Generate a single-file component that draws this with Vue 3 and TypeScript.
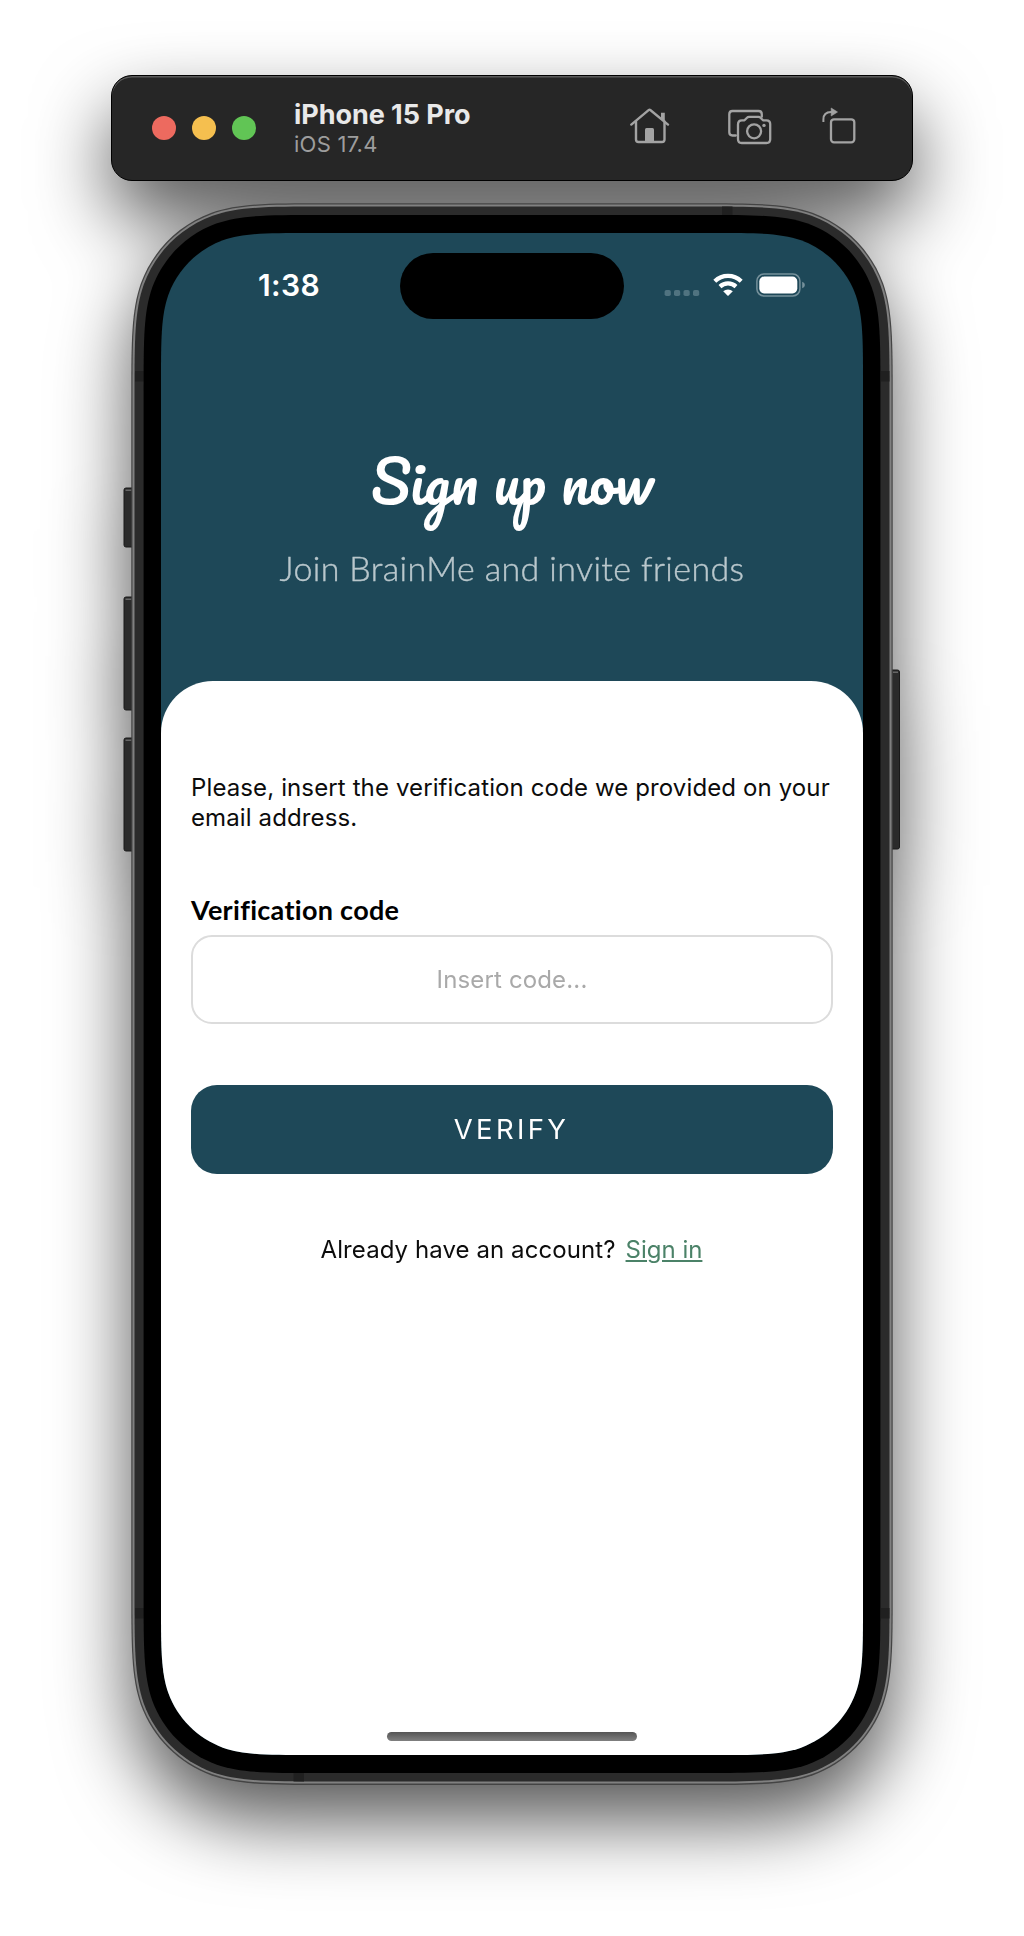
<script setup lang="ts">
import { ref } from 'vue'

const code = ref('')

// Rounded rectangle with continuous (squircle-like) corners.
function squircle(x: number, y: number, w: number, h: number, r: number): string {
  const a = 1.52866 * r
  const b = 1.08849 * r
  const c = 0.845 * r
  const d = 0.63149 * r
  const e = 0.07491 * r
  const f = 0.37282 * r
  const g = 0.16906 * r
  const R = x + w
  const B = y + h
  return [
    `M${x + a} ${y}L${R - a} ${y}`,
    `C${R - b} ${y} ${R - c} ${y} ${R - d} ${y + e}`,
    `C${R - f} ${y + g} ${R - g} ${y + f} ${R - e} ${y + d}`,
    `C${R} ${y + c} ${R} ${y + b} ${R} ${y + a}`,
    `L${R} ${B - a}`,
    `C${R} ${B - b} ${R} ${B - c} ${R - e} ${B - d}`,
    `C${R - g} ${B - f} ${R - f} ${B - g} ${R - d} ${B - e}`,
    `C${R - c} ${B} ${R - b} ${B} ${R - a} ${B}`,
    `L${x + a} ${B}`,
    `C${x + b} ${B} ${x + c} ${B} ${x + d} ${B - e}`,
    `C${x + f} ${B - g} ${x + g} ${B - f} ${x + e} ${B - d}`,
    `C${x} ${B - c} ${x} ${B - b} ${x} ${B - a}`,
    `L${x} ${y + a}`,
    `C${x} ${y + b} ${x} ${y + c} ${x + e} ${y + d}`,
    `C${x + g} ${y + f} ${x + f} ${y + g} ${x + d} ${y + e}`,
    `C${x + c} ${y} ${x + b} ${y} ${x + a} ${y}Z`,
  ].join('')
}

const edge = squircle(-0.7, 0.3, 761.4, 1581.7, 127)
const rim = squircle(0.5, 1.5, 759, 1579, 126)
const body = squircle(2.5, 3.5, 755, 1575, 123.6)
const bezel = squircle(11.6, 12, 736.8, 1558, 115)
const screenClip = `path("${squircle(0, 0, 702, 1522, 98)}")`
</script>

<template>
  <main class="desktop">
    <div class="simulator">
      <header class="toolbar">
        <div class="lights">
          <span class="light close"></span>
          <span class="light minimise"></span>
          <span class="light zoom"></span>
        </div>
        <div class="device">
          <strong>iPhone 15 Pro</strong>
          <span>iOS 17.4</span>
        </div>
        <nav class="actions">
          <svg width="40" height="38" viewBox="0 0 40 38" fill="none" stroke="#a3a3a3" stroke-width="2.4" stroke-linecap="round" stroke-linejoin="round">
            <path d="M1.3 17.6 18.6 3.2a1.6 1.6 0 0 1 2 0L38 17.6" />
            <path d="M6 14.5V32.500q0 2.500 2.500 2.500H32q2.500 0 2.500-2.500V14.500" />
            <path d="M31 5.800h3.800v9L31 11.500z" fill="#a3a3a3" stroke="none" />
            <path d="M15 35V22.500q0-1.500 1.500-1.500h6q1.500 0 1.500 1.500V35z" fill="#a3a3a3" stroke="none" />
          </svg>
          <svg width="44" height="38" viewBox="0 0 44 38" fill="none" stroke="#a3a3a3" stroke-width="2.3" stroke-linecap="round" stroke-linejoin="round">
            <path d="M7.800 28.500H4.500Q1.300 28.500 1.300 25.300V7.200Q1.300 4 4.500 4H30.500Q33.800 4 33.800 7.200V9.800" />
            <path d="M10 17.500Q10 13.300 14 13.300H16.500L19 10.700Q19.800 9.900 21 9.900H30.500Q31.700 9.900 32.500 10.700L35 13.300H38.500Q42.200 13.300 42.200 17V32.300Q42.200 36 38.500 36H13.700Q10 36 10 32.300Z" />
            <circle cx="26.100" cy="24.300" r="7" />
            <circle cx="36" cy="18.400" r="1.700" fill="#a3a3a3" stroke="none" />
          </svg>
          <svg width="34" height="38" viewBox="0 0 34 38" fill="none" stroke="#a3a3a3" stroke-width="2.3">
            <rect x="9" y="12.300" width="23.300" height="23" rx="3" />
            <path d="M1.400 15V12.500Q1.400 5 9 5H10" stroke-width="2" />
            <path d="M9.200 1 15.500 5 9.200 9z" fill="#a3a3a3" stroke-width=".6" stroke-linejoin="round" />
          </svg>
        </nav>
      </header>

      <section class="phone">
        <svg class="chassis" width="777" height="1582" viewBox="-8 0 777 1582">
          <g fill="#2b2b2b" stroke="#1a1a1a" stroke-width="1">
            <rect x="-8" y="285" width="12" height="59" rx="2" />
            <rect x="-8" y="394" width="12" height="113" rx="2" />
            <rect x="-8" y="535" width="12" height="113" rx="2" />
            <rect x="756" y="467" width="11.500" height="179" rx="2" />
          </g>
          <g fill="#666">
            <rect x="-6.500" y="286.500" width="6" height="1.500" />
            <rect x="-6.500" y="395.500" width="6" height="1.500" />
            <rect x="-6.500" y="536.500" width="6" height="1.500" />
            <rect x="761" y="468.500" width="5" height="1.500" />
          </g>
          <path :d="edge" fill="#444" />
          <path :d="rim" fill="#808080" />
          <path :d="body" fill="#2b2b2b" />
          <g fill="#202020">
            <rect x="3" y="168" width="9" height="10.500" />
            <rect x="749" y="168" width="8.500" height="10.500" />
            <rect x="3" y="1405" width="9" height="10.500" />
            <rect x="749" y="1405" width="8.500" height="10.500" />
            <rect x="590" y="3.500" width="10.500" height="9" />
            <rect x="161.500" y="1570" width="10.500" height="8.500" />
          </g>
          <path :d="bezel" fill="#000" />
        </svg>

        <div class="screen" :style="{ clipPath: screenClip }">
          <div class="status">
            <time>1:38</time>
            <div class="island"></div>
            <div class="indicators">
              <svg width="36" height="24" viewBox="0 0 36 24" fill="#507380">
                <rect x=".6" y="17" width="6.200" height="6" rx="1.800" />
                <rect x="10" y="17" width="6.200" height="6" rx="1.800" />
                <rect x="19.500" y="17" width="6.200" height="6" rx="1.800" />
                <rect x="29" y="17" width="6.200" height="6" rx="1.800" />
              </svg>
              <svg width="30" height="24" viewBox="0 0 30 24" fill="none" stroke="#fff" stroke-width="4.200">
                <path d="M1.800 8.300A19 19 0 0 1 28.200 8.300" />
                <path d="M7 13.600A11.700 11.700 0 0 1 23 13.600" />
                <path d="M10.200 18.300A7 7 0 0 1 19.800 18.300L15.600 22.500Q15 23.100 14.400 22.500Z" fill="#fff" stroke="none" />
              </svg>
              <svg width="50" height="24" viewBox="0 0 50 24">
                <rect x=".9" y="1.100" width="43" height="21.800" rx="7" fill="none" stroke="#76919b" stroke-width="1.500" />
                <rect x="3.300" y="3.600" width="38" height="16.800" rx="4.800" fill="#fff" />
                <path d="M46.200 8.800q2.700 1 2.700 3.200t-2.700 3.200z" fill="#76919b" />
              </svg>
            </div>
          </div>

          <div class="hero">
            <h1>Sign up now</h1>
            <p>Join BrainMe and invite friends</p>
          </div>

          <form class="sheet" @submit.prevent>
            <p class="hint">Please, insert the verification code we provided on your<br />email address.</p>
            <label for="code">Verification code</label>
            <input id="code" v-model="code" type="text" placeholder="Insert code..." />
            <button type="submit">VERIFY</button>
            <p class="account"><span>Already have an account?</span><a href="#">Sign in</a></p>
            <div class="home-indicator"></div>
          </form>
        </div>
      </section>
    </div>
  </main>
</template>

<style>
body {
  margin: 0;
  background: #fff;
}
</style>

<style scoped>
.desktop {
  width: 1024px;
  height: 1936px;
  overflow: hidden;
  background: #fff;
  font-family: Inter, 'Liberation Sans', sans-serif;
}
.simulator {
  display: flex;
  flex-direction: column;
  align-items: center;
  padding-top: 75px;
  filter: drop-shadow(0 36px 38px rgba(0, 0, 0, 0.66));
}
.toolbar {
  box-sizing: border-box;
  display: flex;
  width: 802px;
  height: 106px;
  padding: 0 56px 0 40px;
  border: 1px solid #000;
  border-radius: 21px;
  background: #262626;
  box-shadow: inset 0 1.5px 0 #5a5a5a;
}
.lights {
  display: flex;
  gap: 16px;
  margin-top: 40px;
}
.light {
  width: 24px;
  height: 24px;
  border-radius: 50%;
}
.close { background: #ed6a5f; }
.minimise { background: #f5bf4f; }
.zoom { background: #61c555; }
.device {
  display: flex;
  flex-direction: column;
  margin: 23px 0 0 38px;
  white-space: nowrap;
}
.device strong {
  font-size: 27px;
  font-weight: 700;
  line-height: 32px;
  letter-spacing: -0.05px;
  color: #e9e9e9;
}
.device span {
  font-size: 22px;
  line-height: 26px;
  letter-spacing: 0.25px;
  color: #9d9d9d;
}
.actions {
  display: flex;
  gap: 57px;
  margin: 30.5px 0 0 auto;
}
.actions svg:nth-child(2) { margin-left: 0.5px; }
.actions svg:last-child { margin-left: -6.5px; }
.phone {
  position: relative;
  width: 761px;
  height: 1582px;
  margin: 22px 0 0 1px;
}
.chassis {
  position: absolute;
  top: 0;
  left: -8px;
  overflow: visible;
}
.screen {
  position: relative;
  display: flex;
  flex-direction: column;
  width: 702px;
  height: 1522px;
  margin: 30px 0 0 29px;
  background: #1e4858;
}
.status {
  display: flex;
  align-items: flex-start;
  height: 66px;
  padding: 20px 57px 0 97px;
}
.status time {
  width: 142px;
  margin-top: 14px;
  font-size: 30px;
  font-weight: 600;
  line-height: 36px;
  letter-spacing: 0.35px;
  color: #fff;
}
.island {
  width: 224.5px;
  height: 66px;
  border-radius: 33px;
  background: #000;
}
.indicators {
  display: flex;
  margin: 20px 0 0 40.5px;
}
.indicators svg:nth-child(2) { margin-left: 13px; }
.indicators svg:nth-child(3) { margin-left: 13px; }
.hero {
  height: 362px;
  color: #fff;
  text-align: center;
  white-space: nowrap;
}
h1 {
  margin: 122px 0 0;
  font-family: Pacifico, Lato, sans-serif;
  font-size: 57px;
  font-weight: 400;
  line-height: 80px;
}
.hero p {
  margin: 25px 0 0;
  font-family: Lato, sans-serif;
  font-size: 34px;
  font-weight: 300;
  line-height: 44px;
  letter-spacing: 0.37px;
  color: #b9c7cc;
  -webkit-text-stroke: 0.4px #b9c7cc;
}
.sheet {
  box-sizing: border-box;
  position: relative;
  display: flex;
  flex: 1;
  flex-direction: column;
  padding: 92px 30px 0;
  border-radius: 52px 52px 0 0;
  background: #fff;
}
.hint {
  margin: 0;
  font-size: 24px;
  line-height: 30.4px;
  letter-spacing: 0.12px;
  white-space: nowrap;
  color: #0c0c0c;
}
label {
  margin-top: 60px;
  font-family: Lato, sans-serif;
  font-size: 27px;
  font-weight: 700;
  line-height: 32px;
  letter-spacing: 0.3px;
  color: #000;
}
input {
  box-sizing: border-box;
  width: 642px;
  height: 89.5px;
  margin-top: 9px;
  padding: 0 20px;
  border: 2px solid #dcdcdc;
  border-radius: 21px;
  outline: none;
  background: #fff;
  font: 24px Inter, sans-serif;
  letter-spacing: 0.15px;
  text-align: center;
}
input::placeholder {
  color: #a9a9a9;
  opacity: 1;
}
button {
  height: 89.5px;
  margin: 60.5px 0 0;
  padding: 0 1px 1.5px 0;
  border: 0;
  border-radius: 26px;
  background: #1e4858;
  font: 27.5px Inter, sans-serif;
  letter-spacing: 3.3px;
  color: #fff;
}
.account {
  display: flex;
  gap: 10px;
  justify-content: center;
  margin: 61px 0 0;
  padding-right: 1px;
  font-size: 24px;
  line-height: 30px;
  letter-spacing: 0.08px;
  white-space: nowrap;
  color: #0c0c0c;
}
.account a {
  color: #4b8268;
  letter-spacing: 0;
  text-decoration: underline;
  text-decoration-thickness: 1.5px;
  text-underline-offset: 2px;
}
.home-indicator {
  width: 250px;
  height: 9px;
  margin: auto auto 14px;
  border-radius: 5px;
  background: linear-gradient(#555, #808080);
}
</style>
